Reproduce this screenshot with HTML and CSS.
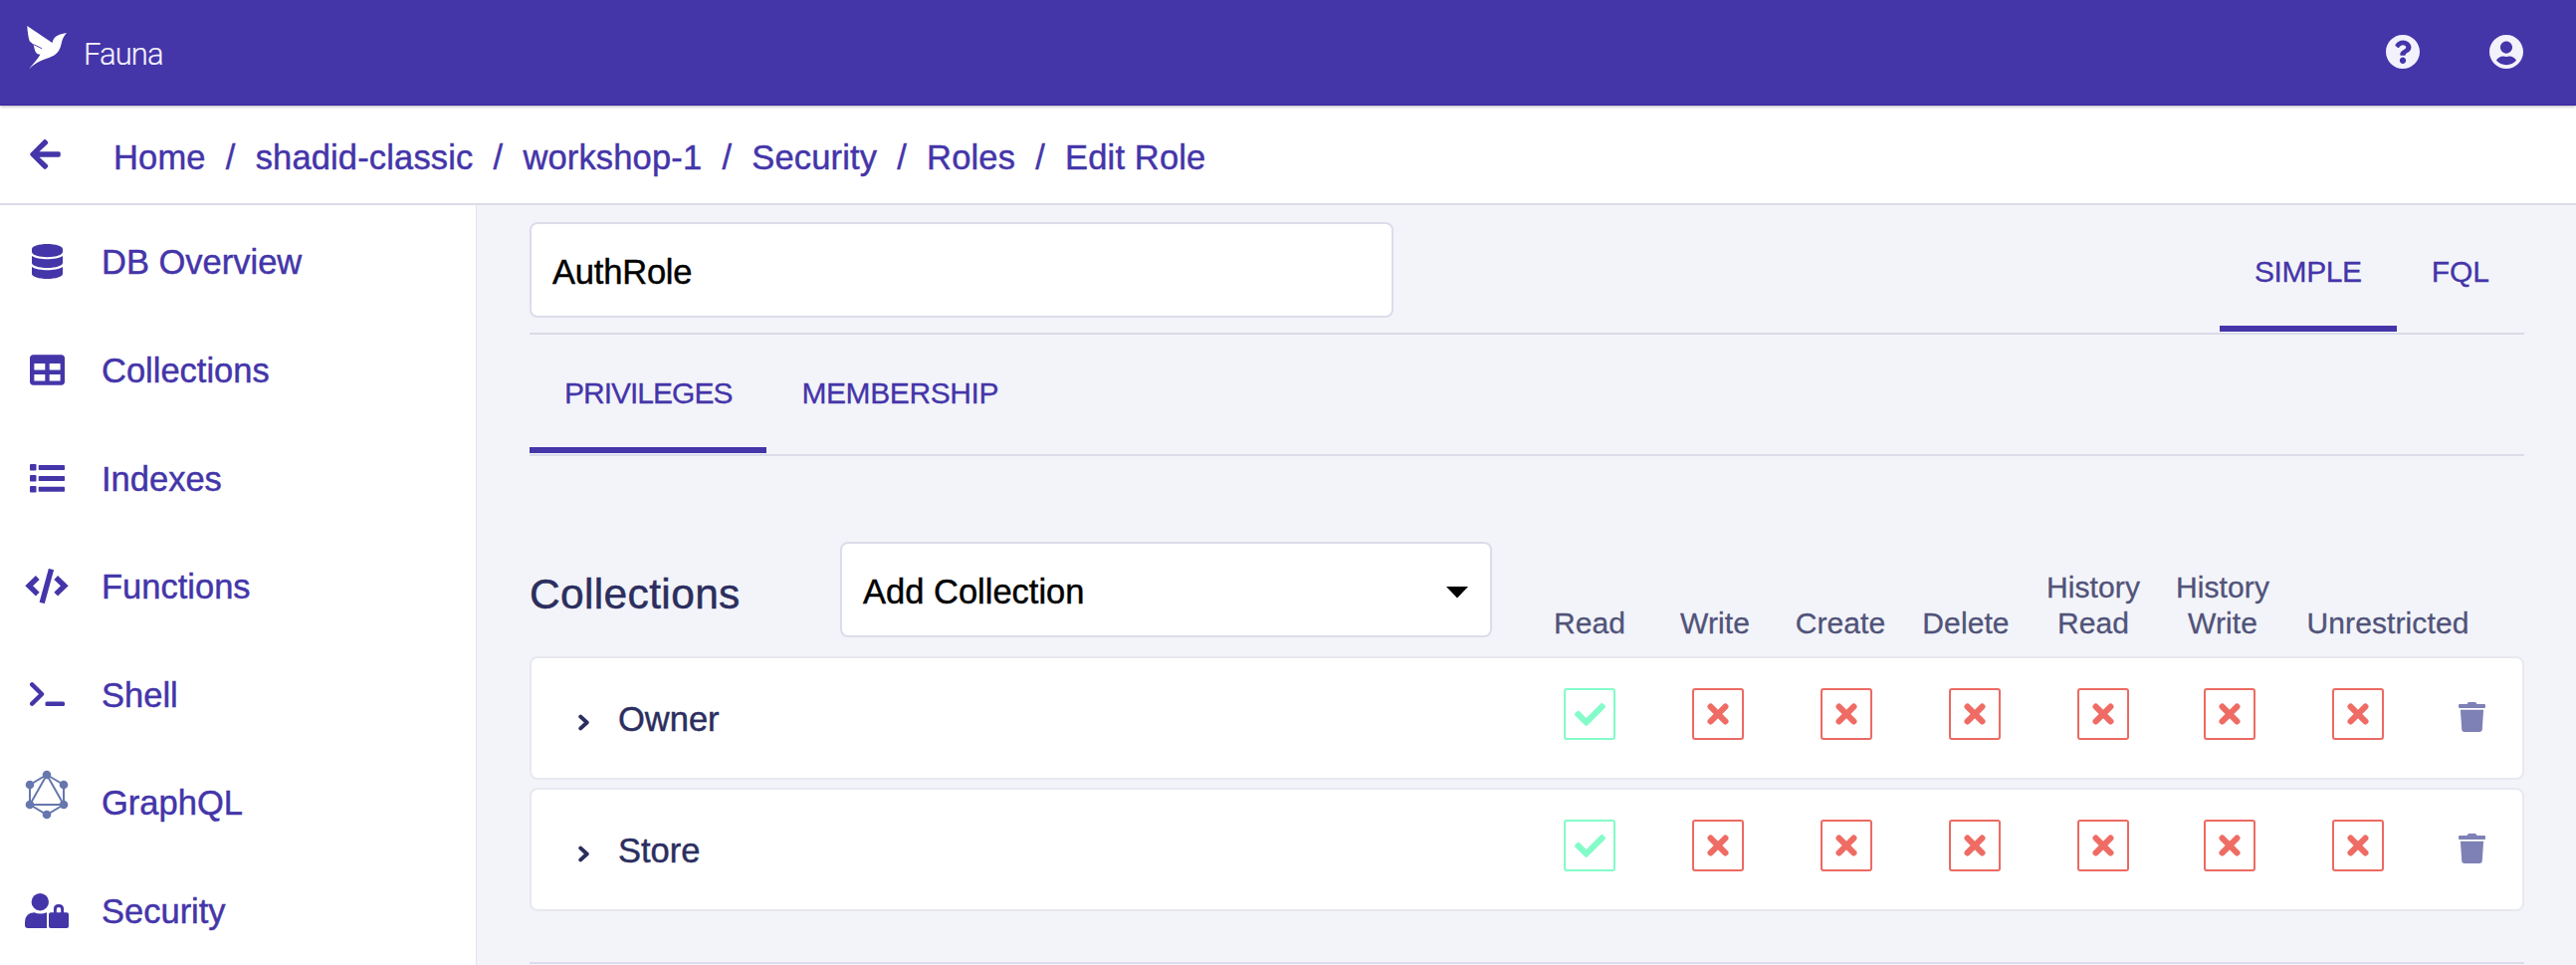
FILE: index.html
```html
<!DOCTYPE html>
<html lang="en">
<head>
<meta charset="utf-8">
<title>Fauna - Edit Role</title>
<link rel="stylesheet" href="styles.css">
</head>
<body>
<svg class="defs" aria-hidden="true">
  <symbol id="check" viewBox="0 0 512 512"><path d="M173.898 439.404l-166.4-166.4c-9.997-9.997-9.997-26.206 0-36.204l36.203-36.204c9.997-9.998 26.207-9.998 36.204 0L192 312.69 432.095 72.596c9.997-9.997 26.207-9.997 36.204 0l36.203 36.204c9.997 9.997 9.997 26.206 0 36.204l-294.4 294.401c-9.998 9.997-26.207 9.997-36.204-.001z"/></symbol>
  <symbol id="times" viewBox="0 0 22 22"><path d="M3.6 3.6L18.4 18.4M18.4 3.6L3.6 18.4" fill="none" stroke="currentColor" stroke-width="6.2" stroke-linecap="round"/></symbol>
  <symbol id="trash" viewBox="0 0 27 30"><path d="M1.2 2h7.3l.9-1.4Q9.800 0 10.500 0h6q.7 0 1.100.6L18.500 2h7.300q1.200 0 1.200 1.200V5q0 .9-1 .9H1Q0 5.900 0 5V3.200Q0 2 1.200 2zM1.900 7.800h23.200l-1.300 19.500q-.2 2.700-2.800 2.700H6q-2.600 0-2.800-2.700z"/></symbol>
  <symbol id="chevron" viewBox="0 0 12 17"><path d="M2.300 2.600L8.700 8.500L2.300 14.400" fill="none" stroke="currentColor" stroke-width="4" stroke-linejoin="round" stroke-linecap="round"/></symbol>
</svg>

<header class="topbar">
  <a class="brand" href="#">
    <svg class="logo" viewBox="0 0 40 44"><path fill="#fff" d="M.3 0L25.500 17C27 11.500 29.500 8.600 40 7C36.500 10.500 35.500 14 34.500 18.500C33.500 23 31.500 27 27.500 29.500C21 33.500 11.500 33.500 2 43.500C6 38 10 34.500 13.500 28.800C11.500 28.700 10 28 9 26.500C7.800 24.500 7.400 21.500 6.600 18.700C5.500 17.500 4 16.500 2.800 15.500C1.300 11 .6 5 .3 0Z"/><path stroke="#4435a9" stroke-width=".9" d="M6.500 18.500L15 22.700"/></svg>
    <span class="brand-name">Fauna</span>
  </a>
  <div class="top-actions">
    <svg class="top-icon" viewBox="8 8 496 496"><path d="M504 256c0 136.997-111.043 248-248 248S8 392.997 8 256C8 119.083 119.043 8 256 8s248 111.083 248 248zM262.655 90c-54.497 0-89.255 22.957-116.549 63.758-3.536 5.286-2.353 12.415 2.715 16.258l34.699 26.310c5.205 3.947 12.621 3.008 16.665-2.122 17.864-22.658 30.113-35.797 57.303-35.797 20.429 0 45.698 13.148 45.698 32.958 0 14.976-12.363 22.667-32.534 33.976C247.128 238.528 216 254.941 216 296v4c0 6.627 5.373 12 12 12h56c6.627 0 12-5.373 12-12v-1.333c0-28.462 83.186-29.647 83.186-106.667 0-58.002-60.165-102-116.531-102zM256 338c-25.365 0-46 20.635-46 46 0 25.364 20.635 46 46 46s46-20.636 46-46c0-25.365-20.635-46-46-46z"/></svg>
    <svg class="top-icon" viewBox="0 8 496 496"><path d="M248 8C111 8 0 119 0 256s111 248 248 248 248-111 248-248S385 8 248 8zm0 96c48.600 0 88 39.400 88 88s-39.400 88-88 88-88-39.400-88-88 39.400-88 88-88zm0 344c-58.700 0-111.300-26.600-146.500-68.200 18.800-35.400 55.600-59.800 98.500-59.800 2.400 0 4.800.4 7.100 1.100 13 4.200 26.600 6.900 40.900 6.900 14.300 0 28-2.700 40.900-6.900 2.300-.7 4.700-1.100 7.100-1.100 42.900 0 79.700 24.400 98.500 59.800C359.300 421.400 306.700 448 248 448z"/></svg>
  </div>
</header>

<nav class="crumbbar">
  <svg class="back" viewBox="0 36 448 440"><path d="M257.500 445.100l-22.200 22.200c-9.400 9.400-24.600 9.400-33.900 0L7 273c-9.400-9.400-9.400-24.600 0-33.900L201.400 44.700c9.400-9.400 24.600-9.400 33.900 0l22.200 22.200c9.500 9.500 9.300 25-.4 34.300L136.600 216H424c13.300 0 24 10.700 24 24v32c0 13.300-10.700 24-24 24H136.600l120.500 114.800c9.800 9.300 10 24.800.4 34.300z"/></svg>
  <div class="crumbs">
    <a>Home</a><i>/</i><a>shadid-classic</a><i>/</i><a>workshop-1</a><i>/</i><a>Security</a><i>/</i><a>Roles</a><i>/</i><a>Edit Role</a>
  </div>
</nav>

<div class="layout">
  <aside class="sidebar">
    <a class="item"><span class="ico"><svg width="31" height="35" viewBox="0 0 448 512" preserveAspectRatio="none"><path d="M448 73.143v45.714C448 159.143 347.667 192 224 192S0 159.143 0 118.857V73.143C0 32.857 100.333 0 224 0s224 32.857 224 73.143zM448 176v102.857C448 319.143 347.667 352 224 352S0 319.143 0 278.857V176c48.125 33.143 136.208 48.572 224 48.572S399.874 209.143 448 176zm0 160v102.857C448 479.143 347.667 512 224 512S0 479.143 0 438.857V336c48.125 33.143 136.208 48.572 224 48.572S399.874 369.143 448 336z"/></svg></span><span>DB Overview</span></a>
    <a class="item"><span class="ico"><svg width="35" height="31" viewBox="0 32 512 448"><path d="M464 32H48C21.490 32 0 53.490 0 80v352c0 26.510 21.490 48 48 48h416c26.510 0 48-21.490 48-48V80c0-26.510-21.490-48-48-48zM224 416H64v-96h160v96zm0-160H64v-96h160v96zm224 160H288v-96h160v96zm0-160H288v-96h160v96z"/></svg></span><span>Collections</span></a>
    <a class="item"><span class="ico"><svg width="35" height="29" viewBox="0 0 35 29"><path d="M1 0h4.500q1 0 1 1v4.500q0 1-1 1H1q-1 0-1-1V1q0-1 1-1zM1 11h4.500q1 0 1 1v4.500q0 1-1 1H1q-1 0-1-1V12q0-1 1-1zM1 22h4.500q1 0 1 1v4.500q0 1-1 1H1q-1 0-1-1V23q0-1 1-1z"/><rect x="8.700" y="1" width="26.300" height="5" rx=".8"/><rect x="8.700" y="12" width="26.300" height="5" rx=".8"/><rect x="8.700" y="22.800" width="26.300" height="5" rx=".8"/></svg></span><span>Indexes</span></a>
    <a class="item"><span class="ico"><svg width="44" height="35" viewBox="0 0 44 35" fill="none" stroke="currentColor" stroke-width="5.400"><path fill="none" d="M12.800 9L4.200 17.300L12.800 25.600M31.200 9L39.800 17.300L31.200 25.600M26.500 .6L17.200 34.400"/></svg></span><span>Functions</span></a>
    <a class="item"><span class="ico"><svg width="35" height="24" viewBox="0 0 35 24"><path d="M2.200 2.400L12 12L2.200 21.600" fill="none" stroke="currentColor" stroke-width="4.400" stroke-linecap="round" stroke-linejoin="round"/><rect x="15.500" y="19.400" width="19.500" height="4.600" rx="1.500"/></svg></span><span>Shell</span></a>
    <a class="item"><span class="ico graphql"><svg width="44" height="50" viewBox="0 0 44 50"><path d="M22 5L39 15V35L22 45L5 35V15ZM22 5L39 35H5Z" fill="none" stroke="currentColor" stroke-width="2"/><circle cx="22" cy="5" r="4.300"/><circle cx="39" cy="15" r="4.300"/><circle cx="39" cy="35" r="4.300"/><circle cx="22" cy="45" r="4.300"/><circle cx="5" cy="35" r="4.300"/><circle cx="5" cy="15" r="4.300"/></svg></span><span>GraphQL</span></a>
    <a class="item"><span class="ico"><svg width="44" height="35" viewBox="0 0 44 35"><circle cx="15.300" cy="8.700" r="8.700"/><path d="M9.500 19.300Q15.300 21.800 22 19.300V35H3Q0 35 0 32V29Q0 20 9.500 19.300Z"/><path fill-rule="evenodd" d="M28.900 19.300V16Q28.900 11 34 11T39.100 16V19.300H42Q44 19.300 44 21.300V33Q44 35 42 35H26Q24 35 24 33V21.300Q24 19.300 26 19.300ZM31.800 19.300H36.200V16Q36.200 14 34 14T31.800 16Z"/></svg></span><span>Security</span></a>
  </aside>

  <main class="main">
    <div class="rolebar">
      <div class="field role-name">AuthRole</div>
      <div class="tabs">
        <a class="tab active">SIMPLE</a><a class="tab fql">FQL</a>
      </div>
    </div>
    <div class="tabs subtabs">
      <a class="tab active">PRIVILEGES</a><a class="tab">MEMBERSHIP</a>
    </div>

    <section class="perm">
      <div class="perm-head">
        <h2>Collections</h2>
        <div class="field select"><span>Add Collection</span><svg width="22" height="12" viewBox="0 0 22 12"><path d="M0 0H22L11 11.500Z"/></svg></div>
        <div class="cols">
          <span>Read</span><span>Write</span><span>Create</span><span>Delete</span><span class="two">History Read</span><span class="two">History Write</span><span class="wide">Unrestricted</span>
        </div>
      </div>
      <div class="card">
        <svg class="chev"><use href="#chevron"/></svg><span class="name">Owner</span>
        <div class="boxes">
          <b class="box yes"><svg><use href="#check"/></svg></b><b class="box"><svg><use href="#times"/></svg></b><b class="box"><svg><use href="#times"/></svg></b><b class="box"><svg><use href="#times"/></svg></b><b class="box"><svg><use href="#times"/></svg></b><b class="box near"><svg><use href="#times"/></svg></b><b class="box"><svg><use href="#times"/></svg></b>
        </div>
        <svg class="trash"><use href="#trash"/></svg>
      </div>
      <div class="card">
        <svg class="chev"><use href="#chevron"/></svg><span class="name">Store</span>
        <div class="boxes">
          <b class="box yes"><svg><use href="#check"/></svg></b><b class="box"><svg><use href="#times"/></svg></b><b class="box"><svg><use href="#times"/></svg></b><b class="box"><svg><use href="#times"/></svg></b><b class="box"><svg><use href="#times"/></svg></b><b class="box near"><svg><use href="#times"/></svg></b><b class="box"><svg><use href="#times"/></svg></b>
        </div>
        <svg class="trash"><use href="#trash"/></svg>
      </div>
    </section>
  </main>
</div>
</body>
</html>
```

FILE: styles.css
```css
* { box-sizing: border-box; }
body {
  margin: 0;
  height: 969px;
  overflow: hidden;
  display: flex;
  flex-direction: column;
  font-family: "Liberation Sans", Arial, sans-serif;
  font-size: 34.5px;
  background: #f3f4f9;
  color: #4435a9;
  -webkit-text-stroke: .45px currentColor;
}
svg { fill: currentColor; display: block; flex: none; }
.defs { display: none; }

.topbar {
  flex: none;
  height: 106px;
  background: #4435a9;
  border-bottom: 1px solid #3a28a4;
  box-shadow: 0 1px 3px rgba(0, 0, 0, .3);
  display: flex;
  justify-content: space-between;
  padding: 0 53px 0 27px;
  position: relative;
}
.brand { display: flex; text-decoration: none; }
.logo { width: 40px; height: 44px; margin-top: 26px; }
.brand-name {
  font: 300 31px/109px Roboto, sans-serif;
  color: #f3f1fb;
  margin-left: 17px;
  letter-spacing: -.9px;
  -webkit-text-stroke: .2px currentColor;
}
.top-actions { display: flex; gap: 70px; align-items: flex-start; padding-top: 35px; color: #f3f1fb; }
.top-icon { width: 34px; height: 34px; }

.crumbbar {
  flex: none;
  height: 100px;
  background: #fff;
  border-bottom: 2px solid #dcdcea;
  display: flex;
  padding-left: 30px;
}
.back { width: 31px; height: 30px; margin-top: 34px; }
.crumbs {
  display: flex;
  margin-left: 53px;
  line-height: 104px;
  letter-spacing: .15px;
}
.crumbs i { font-style: normal; width: 50px; text-align: center; }

.layout { display: flex; flex: 1; min-height: 0; }
.sidebar {
  width: 479px;
  flex: none;
  background: #fff;
  border-right: 1px solid #e3e5ee;
  padding-top: 3.7px;
}
.item { display: flex; align-items: center; height: 108.6px; padding-left: 25px; }
.ico { width: 44px; display: flex; justify-content: center; margin-right: 33px; margin-bottom: 2px; }
.graphql { color: #6677ad; margin-bottom: 17px; }

.main { flex: 1; padding: 17px 52px 0 53px; }
.field {
  height: 96px;
  background: #fff;
  border: 2px solid #dcdcea;
  border-radius: 8px;
  color: #000;
  line-height: 97px;
  padding-left: 21px;
}
.rolebar {
  height: 113px;
  display: flex;
  justify-content: space-between;
  border-bottom: 2px solid #dadae8;
}
.role-name { width: 868px; letter-spacing: -.2px; }
.tabs { display: flex; font-size: 30px; letter-spacing: -.4px; -webkit-text-stroke-width: .3px; }
.tab { height: 110px; line-height: 100px; padding: 0 35px; }
.fql { letter-spacing: 0; }
.tab.active { border-bottom: 6px solid #4435a9; }
.subtabs { height: 122px; border-bottom: 2px solid #dcdcea; }
.subtabs .tab { height: 119px; line-height: 118px; }
.subtabs .active { letter-spacing: -1px; }

.perm { margin-top: 86px; height: 424px; border-bottom: 2px solid #dcdcea; }
.perm-head { height: 115px; display: flex; color: #2b2e5e; }
h2 { margin: 0; width: 312px; font-weight: 400; font-size: 42.500px; line-height: 105px; letter-spacing: .35px; -webkit-text-stroke-width: .5px; }
.select { width: 655px; display: flex; justify-content: space-between; padding-right: 22px; }
.select svg { margin-top: 43px; }
.cols {
  display: flex;
  align-items: flex-end;
  margin-left: 35px;
  padding-bottom: 15px;
  font-size: 30px;
  line-height: 36px;
  letter-spacing: .1px;
  color: #505379;
  text-align: center;
  -webkit-text-stroke-width: .3px;
}
.cols span { width: 126px; flex: none; }
.cols .two { width: 130px; padding: 0 10px; }
.cols .wide { width: 202px; }

.card {
  height: 124px;
  margin-bottom: 8px;
  background: #fff;
  border: 2px solid #e8e9ef;
  border-radius: 8px;
  color: #2b2e5e;
  display: flex;
  align-items: flex-start;
  padding-left: 47px;
}
.chev { width: 12px; height: 17px; margin-top: 56px; }
.name { width: 991px; margin-left: 28px; line-height: 123px; flex: none; }
.boxes { display: flex; gap: 77px; padding-top: 30px; flex: none; margin-left: -41px; }
.box {
  width: 52px;
  height: 52px;
  border: 2px solid #ec6a62;
  border-radius: 3px;
  color: #ee6c64;
  display: flex;
  align-items: center;
  justify-content: center;
}
.box svg { width: 22px; height: 22px; }
.near { margin-left: -2px; }
.yes { color: #83fcc9; border-color: #83fcc9; }
.yes svg { width: 31px; height: 31px; }
.trash { width: 27px; height: 30px; margin: 44px 0 0 75px; color: #7e81b6; }
```
